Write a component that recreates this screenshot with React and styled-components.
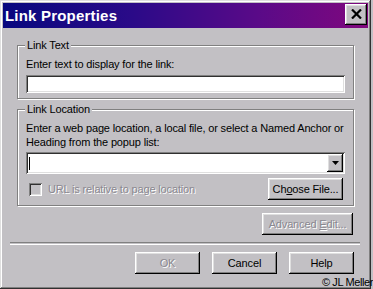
import React from "react";
import styled, { createGlobalStyle } from "styled-components";

const FACE = "#c2c0c4";

const Global = createGlobalStyle`
  html, body { margin: 0; padding: 0; background: ${FACE}; }
  body {
    font-family: "Liberation Sans", Arial, sans-serif;
    font-size: 11px;
    letter-spacing: -0.15px;
    color: #000;
  }
`;

const Page = styled.div`
  position: relative;
  width: 373px;
  height: 289px;
  overflow: hidden;
`;

const Window = styled.div`
  width: 371px;
  height: 289px;
  box-sizing: border-box;
  padding: 3px;
  background: ${FACE};
  box-shadow: inset -1px -1px #303030, inset 1px 1px #dfdfdf,
    inset -2px -2px #808080, inset 2px 2px #fff;
  display: flex;
  flex-direction: column;
`;

const TitleBar = styled.div`
  height: 25px;
  flex: none;
  display: flex;
  align-items: center;
  justify-content: space-between;
  padding: 0 1px 0 2px;
  background: linear-gradient(to right, #08087f 0%, #2a0a88 35%, #5a0a88 70%, #80087e 100%);
`;

const Title = styled.span`
  color: #fff;
  font-weight: bold;
  font-size: 15px;
  letter-spacing: 0.2px;
  line-height: 25px;
`;

const RaisedBase = styled.div`
  box-sizing: border-box;
  background: ${FACE};
  box-shadow: inset -1px -1px #000, inset 1px 1px #fff,
    inset -2px -2px #808080, inset 2px 2px #dfdfdf;
`;

const CloseBox = styled(RaisedBase)`
  width: 22px;
  height: 21px;
  align-self: flex-start;
  margin-top: 1px;
  display: flex;
  align-items: center;
  justify-content: center;
  padding-bottom: 1px;
`;

const Content = styled.div`
  padding: 11px 14px 0 14px;
  display: flex;
  flex-direction: column;
`;

const Group = styled.fieldset`
  margin: ${(p) => (p.$first ? "0" : "4px 0 0 0")};
  padding: 5px 8px 5px 8px;
  border: 1px solid #808080;
  box-shadow: inset 1px 1px #fff, 1px 1px #fff;
  min-width: 0;
`;

const Legend = styled.legend`
  padding: 0 2px;
  margin-left: -1px;
  line-height: 13px;
  background: ${FACE};
`;

const Label = styled.div`
  line-height: 14px;
  margin-bottom: ${(p) => p.$mb || 4}px;
`;

const Sunken = styled.div`
  box-sizing: border-box;
  box-shadow: inset 1px 1px #808080, inset -1px -1px #fff,
    inset 2px 2px #303030, inset -2px -2px #dfdfdf;
  background: ${(p) => (p.$disabled ? FACE : "#fff")};
`;

const TextField = styled(Sunken)`
  width: 100%;
  height: 18px;
`;

const Combo = styled(Sunken)`
  width: 100%;
  height: 22px;
  padding: 2px;
  display: flex;
  align-items: center;
`;

const Caret = styled.span`
  width: 1px;
  height: 13px;
  margin-left: 1px;
  background: #000;
`;

const DropButton = styled(RaisedBase)`
  margin-left: auto;
  width: 16px;
  height: 18px;
  display: flex;
  align-items: center;
  justify-content: center;
`;

const Row = styled.div`
  margin-top: 4px;
  height: 22px;
  display: flex;
  align-items: center;
`;

const CheckBox = styled(Sunken)`
  width: 13px;
  height: 13px;
  margin-left: 3px;
  margin-top: 1px;
`;

const Disabled = styled.span`
  color: #8a8890;
  text-shadow: 1px 1px #fff;
`;

const CheckLabel = styled(Disabled)`
  margin-left: 6px;
  line-height: 14px;
`;

const ButtonBox = styled(RaisedBase).attrs({ as: "button" })`
  width: ${(p) => p.$w || 65}px;
  height: 22px;
  border: none;
  padding: 0;
  margin: 0;
  font: inherit;
  letter-spacing: inherit;
  color: ${(p) => (p.$disabled ? "#8a8890" : "#000")};
  text-shadow: ${(p) => (p.$disabled ? "1px 1px #fff" : "none")};
  display: flex;
  align-items: center;
  justify-content: center;
`;

const ButtonText = styled.span`
  white-space: pre;
`;

const Button = ({ children, ...rest }) => (
  <ButtonBox {...rest}>
    <ButtonText>{children}</ButtonText>
  </ButtonBox>
);

const U = styled.span`
  text-decoration: underline;
`;

const PushRight = styled.div`
  margin-left: auto;
  margin-right: ${(p) => p.$mr || 0}px;
`;

const AdvancedRow = styled.div`
  margin-top: 7px;
  display: flex;
  justify-content: flex-end;
  padding-right: 1px;
`;

const Separator = styled.div`
  margin: 7px -6px 0 -7px;
  height: 1px;
  border-top: 1px solid #808080;
  border-bottom: 1px solid #fff;
`;

const ButtonRow = styled.div`
  margin-top: 7px;
  display: flex;
  justify-content: flex-end;
  gap: 12px;
`;

const Watermark = styled.div`
  position: absolute;
  left: 322px;
  top: 276px;
  font-size: 11px;
  letter-spacing: -0.4px;
  line-height: 13px;
  color: #000;
  white-space: nowrap;
`;

export default function App() {
  return (
    <Page>
      <Global />
      <Window>
        <TitleBar>
          <Title>Link Properties</Title>
          <CloseBox>
            <svg width="11" height="10" viewBox="0 0 11 10">
              <path d="M1 0.5 L10 9.5 M10 0.5 L1 9.5" stroke="#000" strokeWidth="2.2" fill="none" />
            </svg>
          </CloseBox>
        </TitleBar>
        <Content>
          <Group $first>
            <Legend>Link Text</Legend>
            <Label>Enter text to display for the link:</Label>
            <TextField />
          </Group>
          <Group>
            <Legend>Link Location</Legend>
            <Label $mb={3}>
              Enter a web page location, a local file, or select a Named Anchor or
              <br />
              Heading from the popup list:
            </Label>
            <Combo>
              <Caret />
              <DropButton>
                <svg width="7" height="4" viewBox="0 0 7 4">
                  <path d="M0 0 H7 L3.5 4 Z" fill="#000" />
                </svg>
              </DropButton>
            </Combo>
            <Row>
              <CheckBox $disabled />
              <CheckLabel>URL is relative to page location</CheckLabel>
              <PushRight $mr={2}>
                <Button $w={75}>
                  Ch<U>o</U>ose File...
                </Button>
              </PushRight>
            </Row>
          </Group>
          <AdvancedRow>
            <Button $w={91} $disabled>
              Advanced <U>E</U>dit...
            </Button>
          </AdvancedRow>
          <Separator />
          <ButtonRow>
            <Button $disabled>OK</Button>
            <Button>Cancel</Button>
            <Button>Help</Button>
          </ButtonRow>
        </Content>
      </Window>
      <Watermark>© JL Meller</Watermark>
    </Page>
  );
}
